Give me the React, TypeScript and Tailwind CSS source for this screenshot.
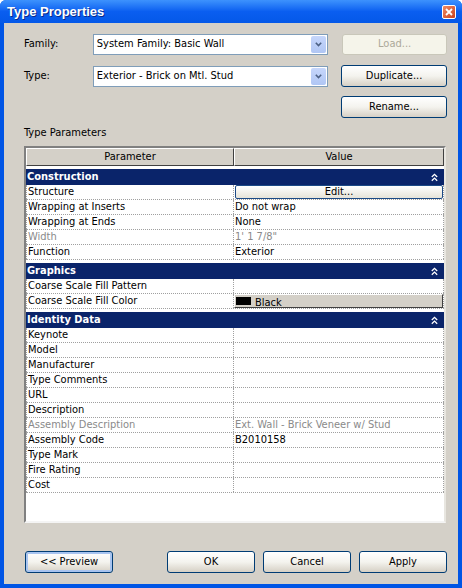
import React from "react";

const FONT = { fontFamily: '"DejaVu Sans Condensed", "Liberation Sans", Arial, sans-serif' };
const TITLE_FONT = { fontFamily: '"Liberation Sans", Arial, sans-serif' };

type Row = { name: string; value?: string; kind?: "edit" | "color"; dim?: boolean };
type Group = { title: string; rows: Row[] };

const groups: Group[] = [
  {
    title: "Construction",
    rows: [
      { name: "Structure", kind: "edit" },
      { name: "Wrapping at Inserts", value: "Do not wrap" },
      { name: "Wrapping at Ends", value: "None" },
      { name: "Width", value: "1'  1 7/8\"", dim: true },
      { name: "Function", value: "Exterior" },
    ],
  },
  {
    title: "Graphics",
    rows: [
      { name: "Coarse Scale Fill Pattern" },
      { name: "Coarse Scale Fill Color", kind: "color" },
    ],
  },
  {
    title: "Identity Data",
    rows: [
      { name: "Keynote" },
      { name: "Model" },
      { name: "Manufacturer" },
      { name: "Type Comments" },
      { name: "URL" },
      { name: "Description" },
      { name: "Assembly Description", value: "Ext. Wall - Brick Veneer w/ Stud", dim: true },
      { name: "Assembly Code", value: "B2010158" },
      { name: "Type Mark" },
      { name: "Fire Rating" },
      { name: "Cost" },
    ],
  },
];

function XpButton({ label, disabled, focused, className = "" }: { label: string; disabled?: boolean; focused?: boolean; className?: string }) {
  if (disabled) {
    return (
      <div className={`flex items-center justify-center rounded-[3px] border border-[#c9c7ba] bg-[#f5f4ea] text-[11px] text-[#aca899] ${className}`}>
        {label}
      </div>
    );
  }
  return (
    <div
      className={`flex items-center justify-center rounded-[3px] border border-[#003c74] bg-gradient-to-b from-white via-[#f4f3ee] to-[#d6d0c5] text-[11px] text-black ${
        focused ? "shadow-[inset_0_0_0_2px_#a8c4f0]" : ""
      } ${className}`}
    >
      {label}
    </div>
  );
}

function Combo({ text }: { text: string }) {
  return (
    <div className="flex h-[21px] w-[236px] items-center border border-[#7f9db9] bg-white pl-[3px] pr-[1px] text-[11px] text-black">
      <span className="flex-1">{text}</span>
      <div className="flex h-[17px] w-[15px] items-center justify-center rounded-[2px] bg-gradient-to-b from-[#c6d6fb] to-[#b0c6f4]">
        <svg width="7" height="5" viewBox="0 0 7 5">
          <path d="M0.8 0.8 L3.5 3.6 L6.2 0.8" fill="none" stroke="#4d6185" strokeWidth="1.6" />
        </svg>
      </div>
    </div>
  );
}

function Chevrons() {
  return (
    <svg width="7" height="9" viewBox="0 0 7 9">
      <path d="M0.8 4 L3.5 1.3 L6.2 4 M0.8 7.8 L3.5 5.1 L6.2 7.8" fill="none" stroke="white" strokeWidth="1.3" />
    </svg>
  );
}

function ParamRow({ row }: { row: Row }) {
  return (
    <div className="flex h-[15px] border-b border-dotted border-[#a0a0a0] text-[11px] leading-[14px]">
      <div className={`w-[208px] border-l border-r border-dotted border-[#a0a0a0] pl-[1px] ${row.dim ? "text-[#8a8a8a]" : "text-black"}`}>
        {row.name}
      </div>
      <div className={`flex-1 border-r border-dotted border-[#a0a0a0] ${row.dim ? "text-[#8a8a8a]" : "text-black"}`}>
        {row.kind === "edit" ? (
          <div className="ml-[1px] flex h-[14px] items-end justify-center overflow-hidden rounded-[2px] border border-[#1c4a86] bg-gradient-to-b from-white to-[#e6e3d8] leading-[13px]">
            Edit...
          </div>
        ) : row.kind === "color" ? (
          <div className="flex h-[14px] items-center overflow-hidden border border-t-white border-l-white border-b-[#404040] border-r-[#404040] bg-[#d4d0c8] pl-[1px]">
            <span className="mr-[4px] h-[8px] w-[15px] bg-black" />
            <span className="pt-[2px] leading-[13px]">Black</span>
          </div>
        ) : (
          <span className="pl-[1px]">{row.value}</span>
        )}
      </div>
    </div>
  );
}

export default function App() {
  return (
    <div style={FONT} className="flex h-[588px] w-[462px] flex-col overflow-hidden rounded-t-[6px] bg-[#0055e5]">
      {/* title bar */}
      <div className="relative flex h-[23px] items-center bg-gradient-to-b from-[#3d92fd] via-[#0a5ef0] to-[#0458e8] pl-[7px]">
        <span style={TITLE_FONT} className="text-[13px] font-bold text-white [text-shadow:1px_1px_0_#0a2a8a]">
          Type Properties
        </span>
        <div className="absolute right-[6px] top-[5px] flex h-[14px] w-[14px] items-center justify-center rounded-[2px] border border-white bg-gradient-to-br from-[#f08a62] to-[#c8401a]">
          <svg width="8" height="8" viewBox="0 0 8 8">
            <path d="M1 1 L7 7 M7 1 L1 7" stroke="white" strokeWidth="1.8" />
          </svg>
        </div>
      </div>

      {/* body */}
      <div className="mx-[4px] mb-[4px] flex flex-1 flex-col bg-[#d4d0c8] pb-[11px] pl-[20px] pr-[11px] pt-[11px] text-[11px] text-black">
        <div className="flex h-[21px] items-center">
          <span className="w-[69px]">Family:</span>
          <Combo text="System Family: Basic Wall" />
          <XpButton label="Load..." disabled className="ml-[14px] h-[21px] w-[105px]" />
        </div>
        <div className="mt-[10px] flex h-[22px] items-center">
          <span className="w-[69px]">Type:</span>
          <Combo text="Exterior - Brick on Mtl. Stud" />
          <XpButton label="Duplicate..." className="ml-[13px] h-[22px] w-[106px]" />
        </div>
        <div className="mt-[9px] flex h-[22px] justify-end">
          <XpButton label="Rename..." className="h-[22px] w-[106px]" />
        </div>
        <div className="mt-[8px] h-[13px] leading-[13px]">Type Parameters</div>

        {/* parameter grid */}
        <div className="mt-[7px] flex h-[377px] w-[422px] flex-col border-2 border-b-[#f4f4f4] border-l-[#808080] border-r-[#e8e6e0] border-t-[#808080] bg-white">
          <div className="flex h-[18px] text-[11px]">
            <div className="flex w-[208px] items-center justify-center border border-b-[#404040] border-l-white border-r-[#404040] border-t-white bg-[#d4d0c8]">
              Parameter
            </div>
            <div className="flex flex-1 items-center justify-center border border-b-[#404040] border-l-white border-r-[#404040] border-t-white bg-[#d4d0c8]">
              Value
            </div>
          </div>
          {groups.map((g) => (
            <div key={g.title} className="pt-[3px]">
              <div className="flex h-[16px] items-center justify-between bg-[#0a246a] pl-[1px] pr-[6px] text-[11px] font-bold text-white">
                <span>{g.title}</span>
                <Chevrons />
              </div>
              {g.rows.map((r) => (
                <ParamRow key={r.name} row={r} />
              ))}
            </div>
          ))}
        </div>

        {/* footer buttons */}
        <div className="mt-[28px] flex h-[22px] items-center">
          <XpButton label="<< Preview" focused className="ml-[1px] h-[22px] w-[88px]" />
          <div className="flex-1" />
          <XpButton label="OK" className="h-[22px] w-[88px]" />
          <XpButton label="Cancel" className="ml-[8px] h-[22px] w-[88px]" />
          <XpButton label="Apply" className="ml-[8px] h-[22px] w-[88px]" />
        </div>
      </div>
    </div>
  );
}
